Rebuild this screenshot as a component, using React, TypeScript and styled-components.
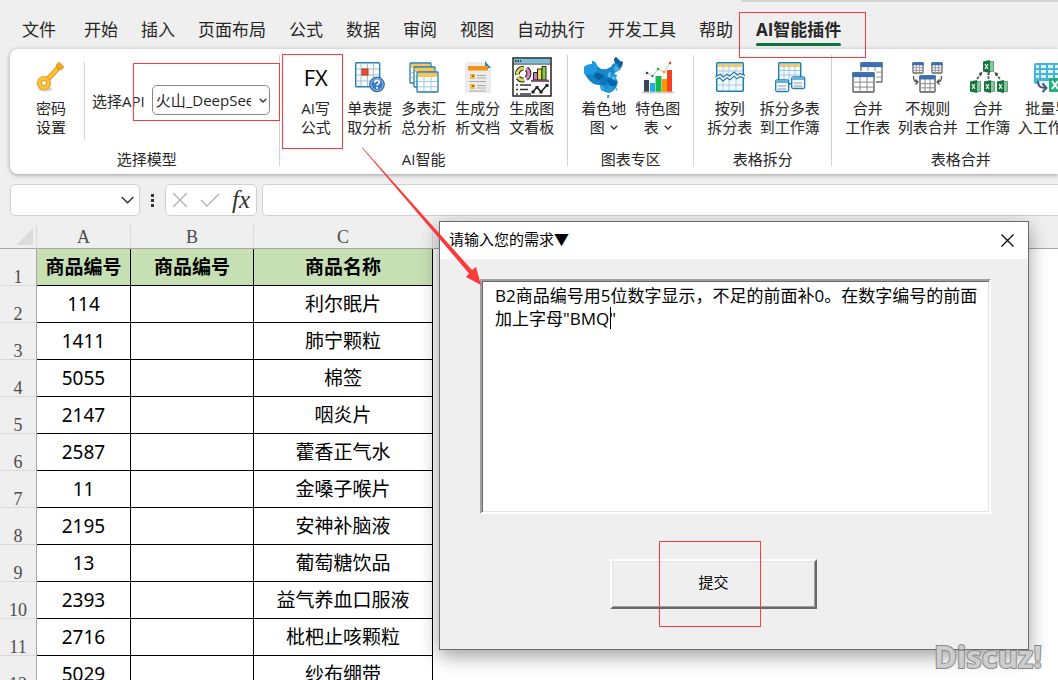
import React from "react";
import styled, { createGlobalStyle } from "styled-components";

const GlobalStyle = createGlobalStyle`
  * { box-sizing: border-box; }
  body {
    margin: 0;
    background: #efefef;
    color: #262626;
    font-family: "Open Sans", "Noto Sans CJK SC", sans-serif;
    font-size: 15px;
  }
  button, select, input, textarea {
    margin: 0;
    padding: 0;
    border: 0;
    background: none;
    color: inherit;
    font: inherit;
    outline: none;
  }
  svg { display: block; }
`;

const Workbook = styled.div`
  position: relative;
  display: flex;
  flex-direction: column;
  height: 100vh;
  overflow: hidden;
`;

const TitleStrip = styled.div`
  display: flex;
  flex: none;
  justify-content: flex-end;
  height: 2px;
`;

const SearchEdge = styled.div`
  width: 30%;
  background: #d4d4d4;
  border-radius: 0 0 0 4px;
`;

const TabBar = styled.nav`
  display: flex;
  align-items: flex-end;
  gap: 23px;
  height: 47px;
  padding: 0 22px;
  flex: none;
`;

const Tab = styled.button<{ $active?: boolean; $wide?: boolean }>`
  position: relative;
  flex: none;
  height: 35px;
  margin-right: ${(p) => (p.$wide ? "5px" : "0")};
  border-bottom: 3px solid transparent;
  font-size: 17px;
  line-height: 24px;
  white-space: nowrap;
  font-weight: ${(p) => (p.$active ? 700 : 400)};
`;

const Underline = styled.span`
  position: absolute;
  left: 0;
  right: 0;
  bottom: 0;
  height: 3px;
  border-radius: 2px;
  background: #0f703b;
`;

const Callout = styled.span<{ $inset: string }>`
  position: absolute;
  inset: ${(p) => p.$inset};
  border: 1px solid #fb3b3b;
  pointer-events: none;
  z-index: 2;
`;

const Ribbon = styled.div`
  display: flex;
  flex: none;
  height: 125px;
  margin-left: 10px;
  padding: 6px 0 8px;
  background: #fff;
  border-radius: 8px 0 0 8px;
  box-shadow: 0 1px 4px rgba(0, 0, 0, 0.35);
`;

const Group = styled.section<{ $plain?: boolean }>`
  display: flex;
  flex-direction: column;
  flex: none;
  padding: 0 ${(p) => (p.$plain ? "9px" : "8px")} 0 ${(p) => (p.$plain ? "14px" : "9px")};
  border-right: 1px solid #d2d2d2;
`;

const GroupItems = styled.div`
  display: flex;
  flex: 1;
`;

const GroupName = styled.div`
  height: 13px;
  line-height: 12px;
  text-align: center;
`;

const Tool = styled.button<{ $wide?: boolean }>`
  position: relative;
  display: flex;
  flex-direction: column;
  align-items: center;
  flex: none;
  width: ${(p) => (p.$wide ? "66px" : "54px")};
`;

const ToolIcon = styled.span`
  display: flex;
  align-items: center;
  justify-content: center;
  height: 44px;
`;

const FxIcon = styled.span`
  color: #000;
  font-size: 22px;
  line-height: 28px;
`;

const ToolLine = styled.span`
  display: flex;
  align-items: center;
  gap: 5px;
  line-height: 19px;
  white-space: nowrap;
`;

const Divider = styled.div`
  width: 1px;
  height: 78px;
  margin: 7px 7px 0 6px;
  background: #d2d2d2;
`;

const ApiField = styled.div`
  position: relative;
  display: flex;
  align-items: center;
  align-self: flex-start;
  gap: 7px;
  height: 30px;
  margin-top: 30px;
`;

const ApiLabel = styled.label`
  white-space: nowrap;
`;

const ApiSelectWrap = styled.div`
  position: relative;
`;

const ApiSelect = styled.select`
  display: block;
  appearance: none;
  width: 118px;
  height: 30px;
  padding: 0 18px 0 3px;
  border: 1px solid #8a8a8a;
  border-radius: 5px;
  background: #fff;
  line-height: 28px;
`;

const SelectArrow = styled.span`
  position: absolute;
  right: 3px;
  top: 13px;
`;

const FormulaBar = styled.div`
  display: flex;
  align-items: center;
  flex: none;
  height: 32px;
  margin: 10px 0 9px 10px;
`;

const NameBox = styled.div`
  display: flex;
  align-items: center;
  width: 130px;
  height: 32px;
  padding-right: 5px;
  border: 1px solid #d0d0d0;
  border-radius: 5px;
  background: #fff;
`;

const NameInput = styled.input`
  flex: 1;
  min-width: 0;
  padding-left: 8px;
`;

const Dots = styled.span`
  display: flex;
  justify-content: center;
  width: 25px;
`;

const FormulaActions = styled.div`
  display: flex;
  align-items: center;
  justify-content: space-around;
  width: 92px;
  height: 32px;
  border: 1px solid #d0d0d0;
  border-radius: 5px;
  background: #fff;
`;

const FormulaButton = styled.button`
  color: #333;
  font: italic 400 25px/26px "Liberation Serif", serif;
`;

const FormulaInput = styled.input`
  flex: 1;
  height: 32px;
  margin-left: 5px;
  padding: 0 8px;
  border: 1px solid #d0d0d0;
  border-right: 0;
  border-radius: 5px 0 0 5px;
  background: #fff;
`;

const Sheet = styled.table`
  width: 100%;
  table-layout: fixed;
  border-spacing: 0;
  background: #fff;
  color: #000;
  font-family: "Noto Sans", "Noto Sans CJK SC", sans-serif;
  font-size: 19px;
`;

const Col = styled.col<{ $width?: number }>`
  width: ${(p) => (p.$width ? `${p.$width}px` : "auto")};
`;

const ColumnHead = styled.th`
  height: 24px;
  padding: 0;
  border-right: 1px solid #d9d9d9;
  border-bottom: 1px solid #a6a6a6;
  background: #efefef;
  color: #4d4d4d;
  font: 400 18px/22px "Liberation Serif", serif;
  vertical-align: bottom;

  &:last-child { border-right: 0; }
`;

const RowHead = styled.th`
  height: 37px;
  padding: 0;
  border-right: 1px solid #a6a6a6;
  border-bottom: 1px solid #d9d9d9;
  background: #efefef;
  color: #4d4d4d;
  font: 400 18px/16px "Liberation Serif", serif;
  vertical-align: bottom;
`;

const Cell = styled.td<{ $title?: boolean }>`
  height: 37px;
  padding: 0;
  border-right: 1px solid #000;
  border-bottom: 1px solid #000;
  background: ${(p) => (p.$title ? "#c6e0b4" : "#fff")};
  font-weight: ${(p) => (p.$title ? 700 : 400)};
  line-height: 24px;
  text-align: center;
  white-space: nowrap;
`;

const Dialog = styled.div`
  position: absolute;
  left: 439px;
  top: 221px;
  width: 590px;
  border: 1px solid #6b6b6b;
  background: #efefef;
  color: #000;
  box-shadow: 0 6px 18px rgba(0, 0, 0, 0.38);
`;

const DialogTitle = styled.header`
  display: flex;
  align-items: center;
  justify-content: space-between;
  height: 37px;
  padding: 0 14px 0 9px;
  background: #fff;
`;

const DialogName = styled.label`
  padding-bottom: 3px;
  line-height: 20px;
`;

const DialogBody = styled.form`
  display: flex;
  flex-direction: column;
  align-items: flex-start;
  gap: 45px;
  padding: 20px 37px 40px 40px;
`;

const PromptWrap = styled.div`
  position: relative;
  width: 100%;
`;

const Prompt = styled.textarea`
  display: block;
  width: 100%;
  height: 235px;
  padding: 3px 8px 3px 13px;
  border: 2px solid;
  border-color: #a0a0a0 #fff #fff #a0a0a0;
  box-shadow: inset 1px 1px 0 #696969, inset -1px -1px 0 #e3e3e3;
  background: #fff;
  font-size: 17px;
  line-height: 23px;
  resize: none;
  overflow: hidden;
`;

const Caret = styled.span`
  position: absolute;
  left: 130px;
  top: 28px;
  width: 1px;
  height: 22px;
  background: #000;
`;

const Submit = styled.button`
  position: relative;
  width: 207px;
  height: 50px;
  margin-left: 130px;
  padding-bottom: 4px;
  border: 2px solid;
  border-color: #fff #696969 #696969 #fff;
  box-shadow: inset 1px 1px 0 #e3e3e3, inset -1px -1px 0 #a0a0a0;
  line-height: 20px;
`;

const ArrowLayer = styled.svg`
  position: absolute;
  left: 360px;
  top: 146px;
  pointer-events: none;
`;

const Watermark = styled.div`
  position: absolute;
  right: 16px;
  bottom: 4px;
  color: #cdcdcd;
  font: 700 32px/40px "Open Sans", sans-serif;
  font-size: 31px;
  -webkit-text-stroke: 2px #8a8a8a;
  paint-order: stroke fill;
`;

const Chevron = () => (
  <svg width="8" height="5" viewBox="0 0 8 5" fill="none" stroke="#333" strokeWidth="1.3">
    <path d="M.7 .7 4 4 7.3 .7" />
  </svg>
);

const KeyIcon = () => (
  <svg width="30" height="32" viewBox="0 0 30 32">
    <ellipse cx="9" cy="28" rx="7" ry="2.5" fill="#bbb" opacity=".7" />
    <path d="M12 18 24 5" stroke="#d98a14" strokeWidth="5" />
    <path d="M12 18 24 5" stroke="#ffc234" strokeWidth="3.4" />
    <path d="M20 4 23 1l5 5-3 3-2-2-1 2Z" fill="#f6a91e" stroke="#dc8f16" strokeWidth=".7" />
    <circle cx="8" cy="22" r="4.6" fill="#fff" stroke="#e79818" strokeWidth="5" />
    <circle cx="8" cy="22" r="4.6" fill="none" stroke="#ffc338" strokeWidth="3.2" />
  </svg>
);

type MiniTableProps = { x: number; y: number; w: number; h: number; head: string; line: string; rim: string; band?: boolean };

const MiniTable = ({ x, y, w, h, head, line, rim, band }: MiniTableProps) => (
  <g transform={`translate(${x} ${y})`}>
    <rect width={w} height={h} rx=".8" fill="#fff" stroke={rim} strokeWidth="1.3" />
    <path
      d={`M1 ${h * 0.48}H${w - 1}M1 ${h * 0.74}H${w - 1}M${w / 3} 1V${h - 1}M${(w * 2) / 3} 1V${h - 1}`}
      stroke={line}
      fill="none"
    />
    {band ? (
      <rect x="-.7" y="-.7" width={w + 1.4} height={h / 5 + 1} fill={head} />
    ) : (
      <rect x="1" y="1" width={w - 2} height={h / 5} fill={head} />
    )}
  </g>
);

const ExtractIcon = () => (
  <svg width="30" height="31" viewBox="0 0 30 31">
    <rect x=".7" y=".7" width="24" height="24" rx="1" fill="#f5fafd" stroke="#287fb3" strokeWidth="1.4" />
    <path d="M1 7H24M1 13H24M1 19H24M6 1V24M12.500 1V24M18.500 1V24" stroke="#a9bfce" />
    <rect x="7" y="7" width="6" height="6" fill="#e94f35" stroke="#b8321f" />
    <circle cx="22" cy="22.500" r="7.300" fill="#397bc5" stroke="#1e5795" />
    <circle cx="22" cy="22.500" r="6" fill="none" stroke="#9fc4ec" />
    <path d="M19.800 20.800c0-3.300 4.800-3 4.500-.3-.2 1.500-2.200 1.500-2.200 3.300M22 25v1.700" fill="none" stroke="#fff" strokeWidth="1.700" />
  </svg>
);

const SummaryIcon = () => (
  <svg width="30" height="31" viewBox="0 0 30 31">
    <MiniTable x={1} y={1} w={21} h={20} head="#f8c555" line="#9fcbe3" rim="#1f7eae" />
    <MiniTable x={5} y={5} w={21} h={20} head="#f8c555" line="#9fcbe3" rim="#1f7eae" />
    <MiniTable x={8} y={10} w={21} h={20} head="#f8c555" line="#9fcbe3" rim="#1f7eae" />
  </svg>
);

const DocIcon = () => (
  <svg width="26" height="32" viewBox="0 0 26 32">
    <path d="M0 1H20L26 7V32H0Z" fill="#ececec" />
    <path d="M20 0 26 7H20Z" fill="#2988bd" />
    <path d="M3 5H23V9.500H3Z" fill="#ef9416" />
    <path d="M5 13h5v5H5ZM5 23h5v5H5Z" fill="#efbd45" />
    <path d="M7 14h2v2H7ZM7 24h2v2H7Z" fill="#9b7420" />
    <path d="M12 14.500h9M12 17h9M4 20.500h17M12 24.500h9M12 27h9M4 30h17" stroke="#a9a9a9" strokeWidth="1.200" />
  </svg>
);

const DashboardIcon = () => (
  <svg width="40" height="40" viewBox="0 0 40 40">
    <rect x="1" y="1" width="38" height="38" fill="#fff" stroke="#222" strokeWidth="1.500" />
    <rect x="2" y="2" width="36" height="4" fill="#72bfdf" />
    <path d="M1 7H39" stroke="#222" strokeWidth="1.200" />
    <path d="M3 4H9" stroke="#222" strokeWidth="1.500" strokeDasharray="1.500 1" />
    <g fill="none" transform="rotate(20 11 17)">
      <path d="M9.500 11.500A5.700 5.700 0 0 0 6 19.500" stroke="#222" strokeWidth="5" />
      <path d="M9.500 11.500A5.700 5.700 0 0 0 6 19.500" stroke="#d5d94b" strokeWidth="3" />
      <path d="M7.500 22A5.700 5.700 0 0 0 14 22" stroke="#222" strokeWidth="5" />
      <path d="M7.500 22A5.700 5.700 0 0 0 14 22" stroke="#d5d94b" strokeWidth="3" />
      <path d="M12.500 11A5.700 5.700 0 0 1 15.500 20" stroke="#222" strokeWidth="5" />
      <path d="M12.500 11A5.700 5.700 0 0 1 15.500 20" stroke="#d784b8" strokeWidth="3" />
    </g>
    <path d="M21.500 15.500h4V23h-4Z" fill="#cf7bb0" stroke="#222" />
    <path d="M25.500 12h4.500v11h-4.500Z" fill="#dce04b" stroke="#222" />
    <path d="M30 9.500h4V23h-4Z" fill="#8ccb45" stroke="#222" />
    <path d="M19 23.800H37" stroke="#7a4b73" strokeWidth="2.200" />
    <path d="M4 28h2M8 28h11M4 32.500h2M8 32.500h8M4 37h2M8 37h11" stroke="#333" strokeWidth="1.600" />
    <path d="m21 35 4-5 4 5 6-7" fill="none" stroke="#222" strokeWidth="1.600" />
    <path d="M19.500 33.500h3v3h-3ZM23.500 29h3v3h-3ZM27.500 33.500h3v3h-3ZM33.500 27h3v3h-3Z" fill="#222" />
  </svg>
);

const MapIcon = () => (
  <svg width="40" height="41" viewBox="0 0 40 41">
    <path d="M0 10 3 8 8 7 8 4 11 5 14 10 17 12 22 12.500 27 10 29 7 31 6 30 2 32 0 36 4 39 5 38 9 36 13 32 15 30 17 33 18 32 21 34 25 32 31 29 34 25 36 21 35 17 33 16 28 10 27 6 24 2 19 0 16Z" fill="#1590d2" />
    <path d="M0 10 3 8 8 7 8 4 11 5 14 10 12 15 5 18 0 16Z" fill="#1c9be0" />
    <path d="M2 19 5 17 11 19 16 24 16 28 10 27 6 24Z" fill="#1384c6" />
    <path d="M11 16 16 15 20 18 18 23 14 23 10 20Z" fill="#0a5fa0" />
    <path d="M14 10 17 12 22 12.500 27 10 29 7 32 9 30 13 25 17 20 18 12 15Z" fill="#1a86cb" />
    <path d="M16 22 20 19 24 21 24 26 20 29 16 27Z" fill="#0f76bb" />
    <path d="M24 16 27 15 27 20 24 20ZM28 19 32 20 31 23 28 22Z" fill="#56b9ea" />
    <path d="M24 21 28 22 33 25 32 29 27 29 24 26Z" fill="#0b66a9" />
    <path d="M16 28 20 29 21 35 17 33Z" fill="#38a9e2" />
    <path d="M25 29 29 29 29 34 25 36 22 33Z" fill="#2398d9" />
    <path d="M30 2 32 0 36 4 34 7 31 6Z" fill="#0c5f9d" />
    <path d="M34 7 36 4 39 5 38 9 35 11Z" fill="#155f92" />
    <path d="M31 8 35 11 36 13 32 15 30 13Z" fill="#4aaee2" />
    <path d="M23 38h3l-1 3h-2Z" fill="#4fb2e4" />
    <path d="M32 31l1.500 1-1 2.500Z" fill="#1590d2" />
  </svg>
);

const ChartIcon = () => (
  <svg width="32" height="33" viewBox="0 0 32 33">
    <path d="M2 19h5v12H2Z" fill="#3b4658" />
    <path d="M8 22h5v9H8Z" fill="#1daee9" />
    <path d="M13.500 15h6v16h-6Z" fill="#14b94c" />
    <path d="M20 18h5v13h-5Z" fill="#ff9500" />
    <path d="M25 9h5v22h-5Z" fill="#f64022" />
    <path d="M0 31.500H32" stroke="#d3cbc6" strokeWidth="1.800" />
    <path d="M5 12 10.500 15 16 8 22 11 28 2" fill="none" stroke="#b9aaa5" strokeWidth=".8" />
    <circle cx="5" cy="12" r="1.300" fill="#3b4658" />
    <circle cx="10.500" cy="15" r="1.300" fill="#3670dd" />
    <circle cx="16" cy="8" r="1.300" fill="#14b94c" />
    <circle cx="22" cy="11" r="1.300" fill="#ff9500" />
    <circle cx="28" cy="2" r="1.300" fill="#f64022" />
  </svg>
);

const SplitColumnIcon = () => (
  <svg width="30" height="32" viewBox="0 0 30 32">
    <rect x="1.700" y="1.700" width="26.600" height="28.600" rx="1" fill="#f2f8fc" stroke="#1f7fb3" strokeWidth="1.500" />
    <path d="M3 3h24v3H3Z" fill="#f8ca66" />
    <path d="M3 10h24M3 24h24M8 3v26M14 3v26M21 3v26" stroke="#a8c9df" />
    <path d="m1 17 4-2 3 3 4-3 3 2 4-4 3 3 3-2 5 2" fill="none" stroke="#1e6f9f" strokeWidth="4" />
    <path d="m1 17 4-2 3 3 4-3 3 2 4-4 3 3 3-2 5 2" fill="none" stroke="#e9f5fc" strokeWidth="1.800" />
  </svg>
);

const SplitBookIcon = () => (
  <svg width="32" height="32" viewBox="0 0 32 32">
    <rect x="4.700" y="1.700" width="22" height="21" rx="1" fill="#f4fafd" stroke="#1f7fb3" strokeWidth="1.500" />
    <path d="M6 3h20v3H6Z" fill="#f8ca66" />
    <path d="M6 9.500h20M6 14h20M10 3v18M15 3v18M21 3v18" stroke="#9ec7df" />
    <g fill="#f4fafd" stroke="#1f7fb3" strokeWidth="1.300">
      <rect x="1.700" y="19" width="13" height="11.500" rx="1.500" />
      <rect x="17.700" y="16" width="13" height="11.500" rx="1.500" />
    </g>
    <path d="M2 20.500h12M18 17.500h12" stroke="#67b2dc" strokeWidth="3" />
    <path d="M4 25h8M4 28h8M20 22h8M20 25h8" stroke="#8a9ba5" />
  </svg>
);

const MergeSheetIcon = () => (
  <svg width="31" height="31" viewBox="0 0 31 31">
    <MiniTable x={9} y={1} w={21} h={19} head="#3a70b2" line="#999" rim="#666" band />
    <path d="M-1 9H24V31H-1Z" fill="#fff" />
    <MiniTable x={1} y={11} w={21} h={19} head="#3a70b2" line="#888" rim="#555" band />
  </svg>
);

const MergeListIcon = () => (
  <svg width="31" height="31" viewBox="0 0 31 31">
    <MiniTable x={1} y={1} w={10} h={10} head="#3a70b2" line="#999" rim="#666" band />
    <MiniTable x={20} y={1} w={10} h={10} head="#3a70b2" line="#999" rim="#666" band />
    <MiniTable x={8} y={14} w={15} h={16} head="#3a70b2" line="#888" rim="#555" band />
    <path d="M1.500 14c0 5 1 6 4.500 6M3.500 17.500 6 20l-2.500 2.500M29.500 14c0 5-1 6-4.500 6M27.500 17.500 25 20l2.500 2.500" fill="none" stroke="#444" strokeWidth="1.200" />
  </svg>
);

const Book = ({ x, y }: { x: number; y: number }) => (
  <g transform={`translate(${x} ${y})`}>
    <path d="M6 1.500h4.500v10H6Z" fill="#8cc4a0" stroke="#5aa877" />
    <path d="M0 1.500 7 0v13L0 11.500Z" fill="#17743c" />
    <path d="m2 4.200 3 4.600M5 4 2 9" stroke="#e6f4ea" strokeWidth="1.200" />
  </g>
);

const MergeBookIcon = () => (
  <svg width="40" height="36" viewBox="0 0 40 36">
    <Book x={15} y={1} />
    <Book x={2} y={21} />
    <Book x={16} y={21} />
    <Book x={29} y={21} />
    <path d="m9 20 4-5M20.500 20v-5M32 20l-4-5" stroke="#555" strokeWidth="1.700" strokeDasharray="3 1" />
    <path d="m14.500 13-4 1 3 2.500ZM20.500 13l-1.500 2.500h3ZM26.500 13l1 4 3-2.500Z" fill="#444" />
  </svg>
);

const ImportIcon = () => (
  <svg width="30" height="32" viewBox="0 0 30 32">
    <rect x="1" y="2" width="26" height="21" rx="2" fill="#46b4dc" />
    <path d="M3 4h3v3H3ZM8 4h5v3H8ZM15 4h5v3h-5ZM22 4h4v3h-4ZM3 9h3v3H3ZM8 9h5v3H8ZM15 9h5v3h-5ZM22 9h4v3h-4ZM3 14h3v3H3ZM8 14h5v3H8ZM15 14h5v3h-5ZM22 14h4v3h-4Z" fill="#dff5fc" />
    <path d="M5 20h12v12H2Z" fill="#fff" opacity=".85" />
    <path d="M5 20c0 6 3 7 8 7M9.500 22.500l4 4.500-4 4" fill="none" stroke="#405773" strokeWidth="2" />
    <rect x="16" y="17" width="14" height="14" rx="1" fill="#21b07b" />
    <path d="m19 20 6 8M25 20l-6 8" stroke="#fff" strokeWidth="2" />
  </svg>
);

type ToolSpec = { icon: React.ReactNode; lines: [string, string]; wide?: boolean; menu?: boolean; marked?: boolean };

const groups: { name: string; tools: ToolSpec[] }[] = [
  {
    name: "AI智能",
    tools: [
      { icon: <FxIcon>FX</FxIcon>, lines: ["AI写", "公式"], marked: true },
      { icon: <ExtractIcon />, lines: ["单表提", "取分析"] },
      { icon: <SummaryIcon />, lines: ["多表汇", "总分析"] },
      { icon: <DocIcon />, lines: ["生成分", "析文档"] },
      { icon: <DashboardIcon />, lines: ["生成图", "文看板"] },
    ],
  },
  {
    name: "图表专区",
    tools: [
      { icon: <MapIcon />, lines: ["着色地", "图"], menu: true },
      { icon: <ChartIcon />, lines: ["特色图", "表"], menu: true },
    ],
  },
  {
    name: "表格拆分",
    tools: [
      { icon: <SplitColumnIcon />, lines: ["按列", "拆分表"] },
      { icon: <SplitBookIcon />, lines: ["拆分多表", "到工作簿"], wide: true },
    ],
  },
  {
    name: "表格合并",
    tools: [
      { icon: <MergeSheetIcon />, lines: ["合并", "工作表"] },
      { icon: <MergeListIcon />, lines: ["不规则", "列表合并"], wide: true },
      { icon: <MergeBookIcon />, lines: ["合并", "工作簿"] },
      { icon: <ImportIcon />, lines: ["批量导", "入工作簿"], wide: true },
    ],
  },
];

const tabs = ["文件", "开始", "插入", "页面布局", "公式", "数据", "审阅", "视图", "自动执行", "开发工具", "帮助"];

const rows: [string, string][] = [
  ["114", "利尔眠片"],
  ["1411", "肺宁颗粒"],
  ["5055", "棉签"],
  ["2147", "咽炎片"],
  ["2587", "藿香正气水"],
  ["11", "金嗓子喉片"],
  ["2195", "安神补脑液"],
  ["13", "葡萄糖饮品"],
  ["2393", "益气养血口服液"],
  ["2716", "枇杷止咳颗粒"],
  ["5029", "纱布绷带"],
];

const ToolButton = ({ icon, lines, wide, menu, marked }: ToolSpec) => (
  <Tool type="button" $wide={wide}>
    <ToolIcon>{icon}</ToolIcon>
    <ToolLine>{lines[0]}</ToolLine>
    <ToolLine>
      {lines[1]}
      {menu && <Chevron />}
    </ToolLine>
    {marked && <Callout $inset="-1px 0 4px -7px" />}
  </Tool>
);

export default function App() {
  return (
    <Workbook>
      <GlobalStyle />
      <TitleStrip>
        <SearchEdge />
      </TitleStrip>
      <TabBar>
        {tabs.map((t, i) => (
          <Tab key={t} type="button" $wide={i === 0}>
            {t}
          </Tab>
        ))}
        <Tab type="button" $active>
          AI智能插件
          <Underline />
          <Callout $inset="-2px -25px -12px -17px" />
        </Tab>
      </TabBar>

      <Ribbon>
        <Group $plain>
          <GroupItems>
            <Tool type="button">
              <ToolIcon>
                <KeyIcon />
              </ToolIcon>
              <ToolLine>密码</ToolLine>
              <ToolLine>设置</ToolLine>
            </Tool>
            <Divider />
            <ApiField>
              <ApiLabel htmlFor="api">选择API</ApiLabel>
              <ApiSelectWrap>
                <ApiSelect id="api">
                  <option>火山_DeepSeek</option>
                </ApiSelect>
                <SelectArrow>
                  <Chevron />
                </SelectArrow>
              </ApiSelectWrap>
              <Callout $inset="-22px -10px -6px 41px" />
            </ApiField>
          </GroupItems>
          <GroupName>选择模型</GroupName>
        </Group>
        {groups.map((g) => (
          <Group key={g.name}>
            <GroupItems>
              {g.tools.map((t) => (
                <ToolButton key={t.lines.join("")} {...t} />
              ))}
            </GroupItems>
            <GroupName>{g.name}</GroupName>
          </Group>
        ))}
      </Ribbon>

      <FormulaBar>
        <NameBox>
          <NameInput aria-label="名称框" />
          <svg width="13" height="8" viewBox="0 0 13 8" fill="none" stroke="#333" strokeWidth="1.400">
            <path d="M.7 1 6.500 6.800 12.300 1" />
          </svg>
        </NameBox>
        <Dots>
          <svg width="3" height="13" viewBox="0 0 3 13" fill="#333">
            <path d="M0 0h3v3H0ZM0 5h3v3H0ZM0 10h3v3H0Z" />
          </svg>
        </Dots>
        <FormulaActions>
          <FormulaButton type="button" aria-label="取消">
            <svg width="16" height="16" viewBox="0 0 16 16" stroke="#b3b3b3" strokeWidth="1.400">
              <path d="M1 1 15 15M15 1 1 15" />
            </svg>
          </FormulaButton>
          <FormulaButton type="button" aria-label="输入">
            <svg width="20" height="14" viewBox="0 0 20 14" fill="none" stroke="#b3b3b3" strokeWidth="1.400">
              <path d="M1 7 7 13 19 1" />
            </svg>
          </FormulaButton>
          <FormulaButton type="button">fx</FormulaButton>
        </FormulaActions>
        <FormulaInput aria-label="编辑栏" />
      </FormulaBar>

      <Sheet>
        <colgroup>
          <Col $width={37} />
          <Col $width={94} />
          <Col $width={123} />
          <Col $width={179} />
          <Col />
        </colgroup>
        <thead>
          <tr>
            <ColumnHead aria-label="全选">
              <svg width="34" height="20" viewBox="0 0 34 20" fill="#dcdcdc">
                <path d="M33 0V17H16Z" />
              </svg>
            </ColumnHead>
            <ColumnHead>A</ColumnHead>
            <ColumnHead>B</ColumnHead>
            <ColumnHead>C</ColumnHead>
            <ColumnHead />
          </tr>
        </thead>
        <tbody>
          <tr>
            <RowHead>1</RowHead>
            <Cell $title>商品编号</Cell>
            <Cell $title>商品编号</Cell>
            <Cell $title>商品名称</Cell>
          </tr>
          {rows.map(([id, name], i) => (
            <tr key={id}>
              <RowHead>{i + 2}</RowHead>
              <Cell>{id}</Cell>
              <Cell />
              <Cell>{name}</Cell>
            </tr>
          ))}
        </tbody>
      </Sheet>

      <Dialog role="dialog" aria-labelledby="prompt-title">
        <DialogTitle>
          <DialogName id="prompt-title" htmlFor="prompt">
            请输入您的需求▼
          </DialogName>
          <button type="button" aria-label="关闭">
            <svg width="13" height="13" viewBox="0 0 13 13" stroke="#000" strokeWidth="1.200">
              <path d="M.5 .5 12.500 12.500M12.500 .5 .5 12.500" />
            </svg>
          </button>
        </DialogTitle>
        <DialogBody>
          <PromptWrap>
            <Prompt id="prompt" defaultValue={'B2商品编号用5位数字显示，不足的前面补0。在数字编号的前面加上字母"BMQ"'} />
            <Caret />
          </PromptWrap>
          <Submit type="button">
            提交
            <Callout $inset="-20px 54px -20px 47px" />
          </Submit>
        </DialogBody>
      </Dialog>

      <ArrowLayer width="124" height="142" viewBox="0 0 124 142" fill="#fb3b3b">
        <path d="M2 2 2.500 1.500 112 124 116 121 121 139 106 131 109 127.500Z" />
      </ArrowLayer>
      <Watermark>Discuz!</Watermark>
    </Workbook>
  );
}
